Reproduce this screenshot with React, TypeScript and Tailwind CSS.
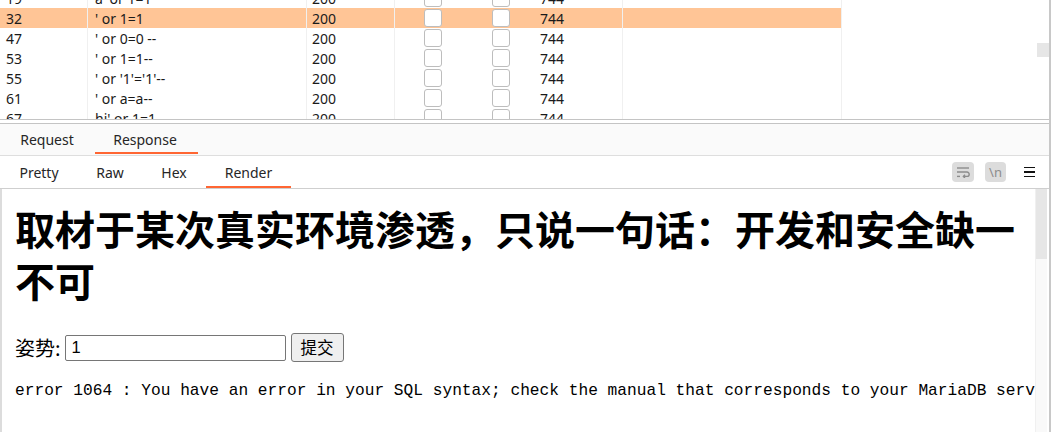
import React from 'react';

const rows = [
  { id: '19', payload: "a' or 1=1" },
  { id: '32', payload: "' or 1=1", selected: true },
  { id: '47', payload: "' or 0=0 --" },
  { id: '53', payload: "' or 1=1--" },
  { id: '55', payload: "' or '1'='1'--" },
  { id: '61', payload: "' or a=a--" },
  { id: '67', payload: "hi' or 1=1" },
];

const uiFont = { fontFamily: '"Noto Sans", "Open Sans", sans-serif' };

function Checkbox() {
  return <span className="block w-[18px] h-[18px] rounded-[3px] border-[1.5px] border-[#bdbdbd] bg-white" />;
}

function ResultsTable() {
  return (
    <div className="flex h-[119px] overflow-hidden">
      <div className="w-[1037px] overflow-hidden">
        <div className="-mt-[12px]">
          {rows.map((r) => (
            <div
              key={r.id}
              className={`flex h-[20px] w-[842px] items-center text-[14px] text-[#1a1a1a] ${r.selected ? 'bg-[#ffc596]' : 'bg-white'}`}
            >
              <div className="w-[88px] h-full flex items-center pl-[6px] border-r border-[#f0f0f0]">{r.id}</div>
              <div className="w-[219px] h-full flex items-center pl-[7px] border-r border-[#f0f0f0]">{r.payload}</div>
              <div className="w-[88px] h-full flex items-center pl-[5px] border-r border-[#f0f0f0]">200</div>
              <div className="w-[74px] h-full flex items-center justify-center pl-[1px]"><Checkbox /></div>
              <div className="w-[64px] h-full flex items-center justify-center"><Checkbox /></div>
              <div className="w-[90px] h-full flex items-center pl-[7px] border-r border-[#f0f0f0]">744</div>
              <div className="w-[219px] h-full border-r border-[#f0f0f0]" />
            </div>
          ))}
        </div>
      </div>
      <div className="w-[12px] h-full bg-white pt-[43px]">
        <div className="h-[14px] bg-[#e6e6e6]" />
      </div>
    </div>
  );
}

function WrapIcon() {
  return (
    <span className="w-[22px] h-[20px] rounded-[4px] bg-[#dcdcdc] flex items-center justify-center">
      <svg width="14" height="12" viewBox="0 0 14 12" fill="none" stroke="#8c8c8c" strokeWidth="1.4">
        <path d="M1 2h12" />
        <path d="M1 6h10a2.2 2.2 0 0 1 0 4.4H7.5" />
        <path d="M9 8.8l-1.6 1.6L9 12" />
        <path d="M1 10.4h3" />
      </svg>
    </span>
  );
}

export default function App() {
  return (
    <div className="w-[1054px] h-[432px] overflow-hidden bg-white flex" style={uiFont}>
      <div className="w-[1051px] h-full flex flex-col border-r-2 border-[#c8c8c8]">
        <ResultsTable />
        <div className="h-[5px] border-y border-[#c4c4c4] bg-white" />

        {/* Request / Response */}
        <div className="h-[32px] flex bg-[#fafafa] border-b border-[#dedede] text-[14px] text-[#262626]">
          <div className="w-[95px] flex items-center justify-center pr-[1px]">Request</div>
          <div className="relative w-[103px] flex items-center justify-center pr-[3px]">
            Response
            <span className="absolute left-0 right-0 bottom-[1px] h-[2px] bg-[#ff6633]" />
          </div>
        </div>

        {/* view modes */}
        <div className="h-[33px] flex items-center border-b border-[#cfcfcf] text-[14px] text-[#262626]">
          <div className="w-[78px] h-full flex items-center justify-center">Pretty</div>
          <div className="w-[64px] h-full flex items-center justify-center">Raw</div>
          <div className="w-[64px] h-full flex items-center justify-center">Hex</div>
          <div className="relative w-[85px] h-full flex items-center justify-center">
            Render
            <span className="absolute left-0 right-0 bottom-0 h-[2px] bg-[#ff6633]" />
          </div>
          <div className="flex-1" />
          <WrapIcon />
          <span className="ml-[11px] w-[21px] h-[20px] rounded-[4px] bg-[#dcdcdc] flex items-center justify-center text-[13px] text-[#8c8c8c] leading-none">\n</span>
          <span className="ml-[18px] mr-[14px] w-[11px] flex flex-col gap-[3px]">
            <span className="h-[1.5px] bg-[#111]" />
            <span className="h-[1.5px] bg-[#111]" />
            <span className="h-[1.5px] bg-[#111]" />
          </span>
        </div>

        {/* rendered page */}
        <div className="flex-1 flex min-h-0">
          <div className="w-[1035px] overflow-hidden border-l-2 border-[#dcdcdc] pl-[13px] pr-[10px] pt-[13px] text-black">
            <h1
              className="text-[40px] leading-[52px] font-bold"
              style={{ fontFamily: '"Noto Sans CJK SC", "Noto Sans", sans-serif' }}
            >
              取材于某次真实环境渗透，只说一句话：开发和安全缺一不可
            </h1>
            <div
              className="mt-[27px] flex items-center text-[20px]"
              style={{ fontFamily: '"Noto Sans CJK SC", "Noto Sans", sans-serif' }}
            >
              <span className="leading-none">姿势:</span>
              <input
                readOnly
                value="1"
                className="ml-[4px] w-[221px] h-[26px] border border-[#767676] rounded-[2px] px-[6px] text-[16.5px] bg-white outline-none"
                style={{ fontFamily: '"Liberation Sans", Arial, sans-serif' }}
              />
              <button className="ml-[5px] w-[53px] h-[29px] border border-[#767676] rounded-[3px] bg-[#efefef] text-[16.5px] leading-none">
                提交
              </button>
            </div>
            <div
              className="mt-[19px] whitespace-nowrap text-[16.2px] leading-[20px]"
              style={{ fontFamily: '"Liberation Mono", "Courier New", monospace' }}
            >
              error 1064 : You have an error in your SQL syntax; check the manual that corresponds to your MariaDB server version for the right syntax to use near '1' at line 1
            </div>
          </div>
          <div className="w-[12px] h-full bg-[#f9f9f9] border-l border-[#f0f0f0]">
            <div className="h-[70px] bg-[#e6e6e6]" />
          </div>
        </div>
      </div>
    </div>
  );
}
